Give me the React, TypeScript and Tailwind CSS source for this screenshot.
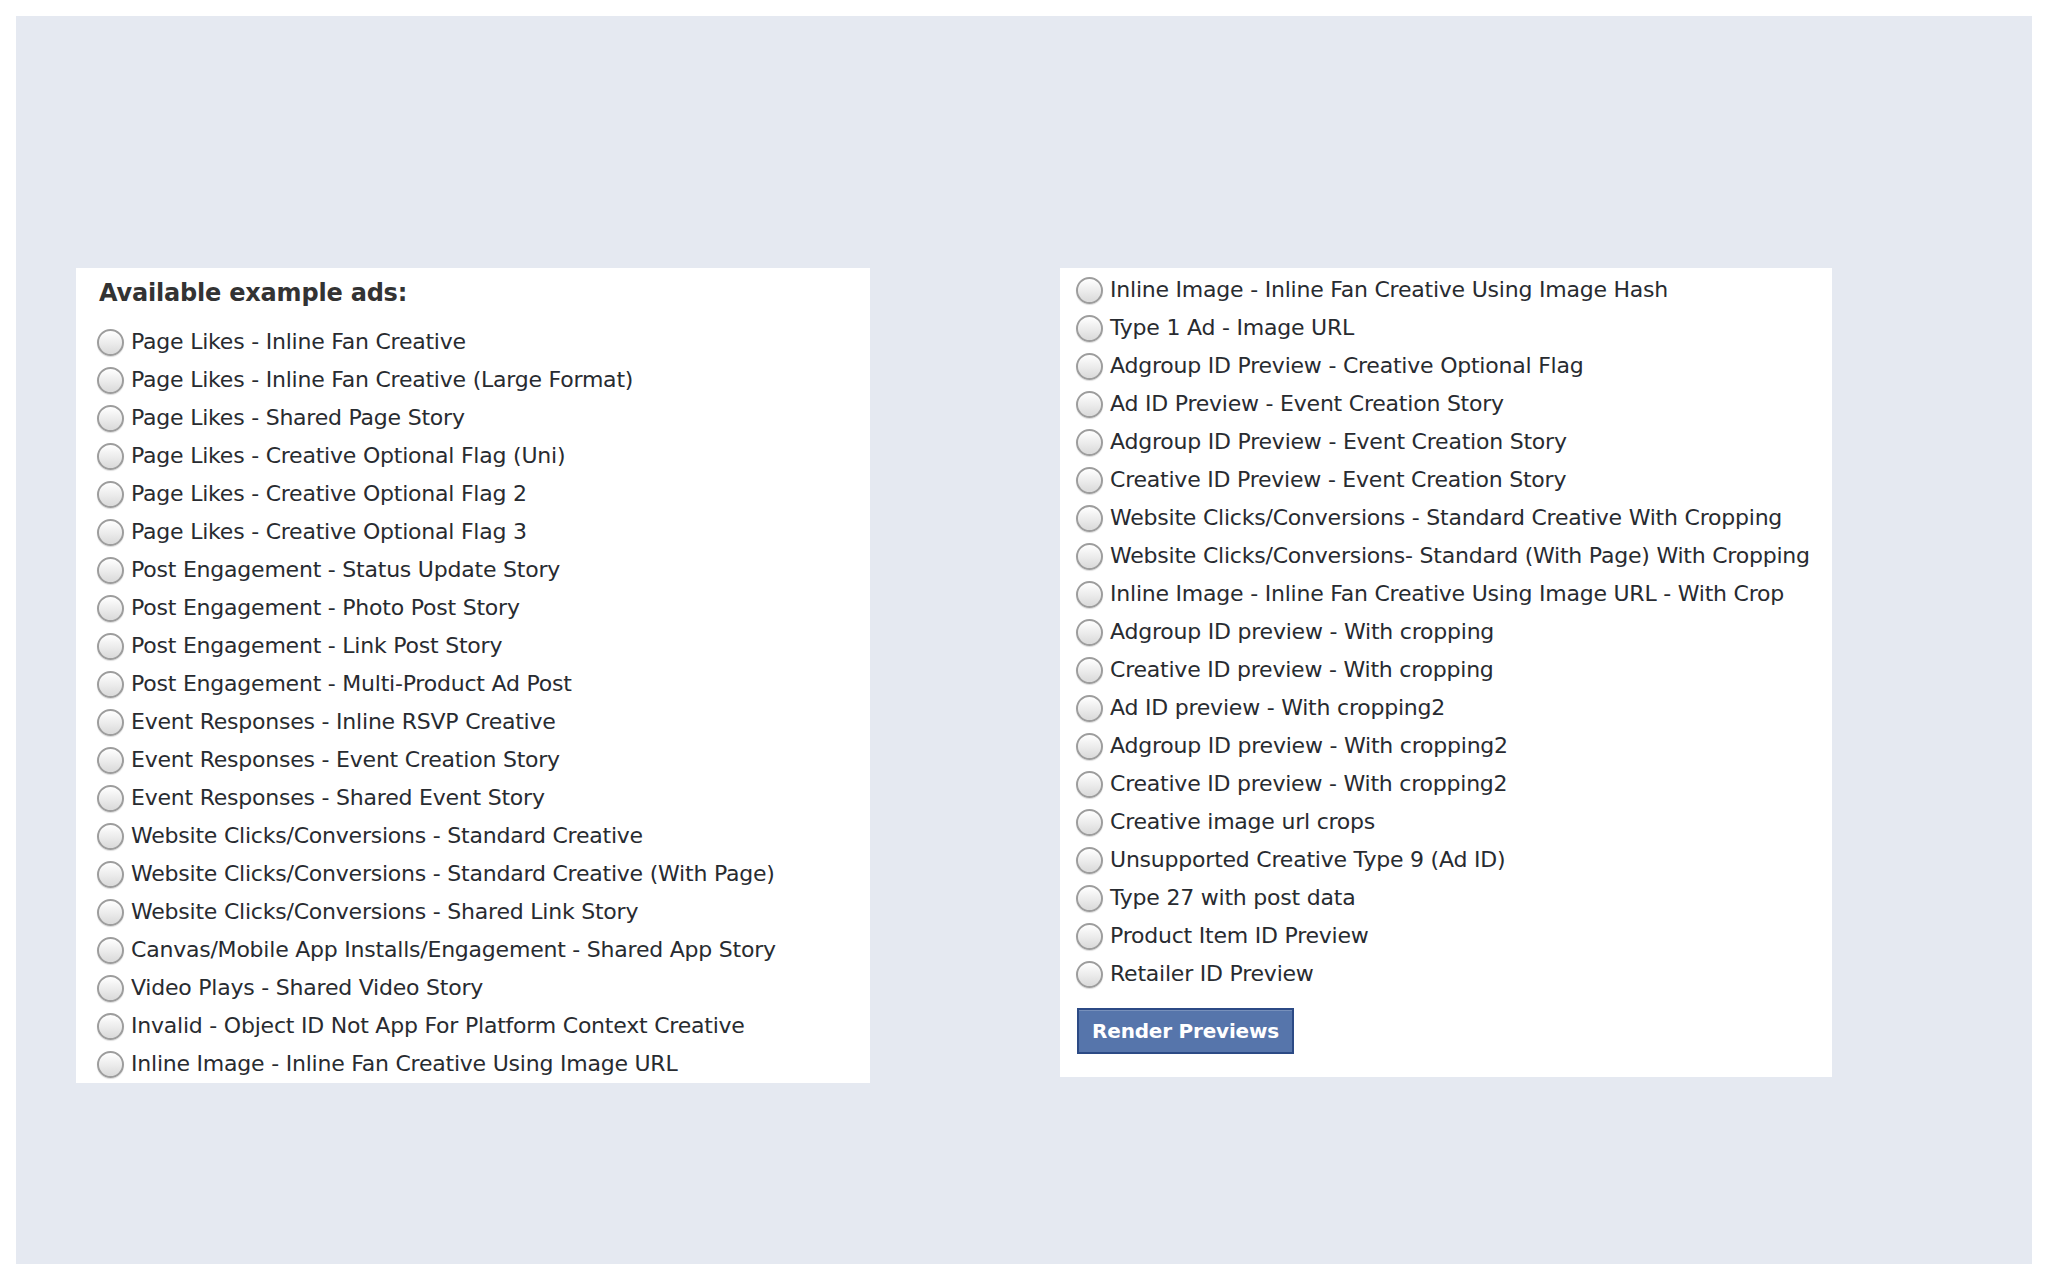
const LEFT_ADS = [
  "Page Likes - Inline Fan Creative",
  "Page Likes - Inline Fan Creative (Large Format)",
  "Page Likes - Shared Page Story",
  "Page Likes - Creative Optional Flag (Uni)",
  "Page Likes - Creative Optional Flag 2",
  "Page Likes - Creative Optional Flag 3",
  "Post Engagement - Status Update Story",
  "Post Engagement - Photo Post Story",
  "Post Engagement - Link Post Story",
  "Post Engagement - Multi-Product Ad Post",
  "Event Responses - Inline RSVP Creative",
  "Event Responses - Event Creation Story",
  "Event Responses - Shared Event Story",
  "Website Clicks/Conversions - Standard Creative",
  "Website Clicks/Conversions - Standard Creative (With Page)",
  "Website Clicks/Conversions - Shared Link Story",
  "Canvas/Mobile App Installs/Engagement - Shared App Story",
  "Video Plays - Shared Video Story",
  "Invalid - Object ID Not App For Platform Context Creative",
  "Inline Image - Inline Fan Creative Using Image URL",
];

const RIGHT_ADS = [
  "Inline Image - Inline Fan Creative Using Image Hash",
  "Type 1 Ad - Image URL",
  "Adgroup ID Preview - Creative Optional Flag",
  "Ad ID Preview - Event Creation Story",
  "Adgroup ID Preview - Event Creation Story",
  "Creative ID Preview - Event Creation Story",
  "Website Clicks/Conversions - Standard Creative With Cropping",
  "Website Clicks/Conversions- Standard (With Page) With Cropping",
  "Inline Image - Inline Fan Creative Using Image URL - With Crop",
  "Adgroup ID preview - With cropping",
  "Creative ID preview - With cropping",
  "Ad ID preview - With cropping2",
  "Adgroup ID preview - With cropping2",
  "Creative ID preview - With cropping2",
  "Creative image url crops",
  "Unsupported Creative Type 9 (Ad ID)",
  "Type 27 with post data",
  "Product Item ID Preview",
  "Retailer ID Preview",
];

function AdOption({ label }: { label: string }) {
  return (
    <label className="flex h-[38px] items-center gap-[7px] cursor-default">
      {/* aqua-style radio */}
      <span className="h-[27px] w-[27px] shrink-0 rounded-full border-2 border-[#9d9d9d] bg-gradient-to-b from-[#ffffff] to-[#dadada] shadow-[inset_0_1px_1px_rgba(255,255,255,0.9),0_1px_1px_rgba(0,0,0,0.15)]" />
      <span className="whitespace-nowrap text-[22px] leading-none tracking-[-0.22px] text-[#282b30]">{label}</span>
    </label>
  );
}

export default function App() {
  return (
    <div className="min-h-screen bg-white p-4 font-['DejaVu_Sans',sans-serif]">
      <div className="flex h-[1248px] items-start gap-[190px] bg-[#e5e9f1] pl-[60px] pt-[252px]">
        <div className="w-[794px] bg-white pl-[21px]">
          <h3 className="pb-[15px] pt-[10px] pl-[2px] text-[24px] font-bold leading-[30px] tracking-[-0.2px] text-[#333]">
            Available example ads:
          </h3>
          {LEFT_ADS.map((ad) => (
            <AdOption key={ad} label={ad} />
          ))}
        </div>

        <div className="w-[772px] bg-white pb-[23px] pl-[16px] pt-[3px]">
          {RIGHT_ADS.map((ad) => (
            <AdOption key={ad} label={ad} />
          ))}
          <button className="ml-px mt-[15px] h-[46px] w-[217px] border-2 border-[#2c4a85] bg-[#5675ab] text-[20px] font-bold tracking-[-0.2px] text-white shadow-[inset_0_1px_0_rgba(255,255,255,0.2)]">
            Render Previews
          </button>
        </div>
      </div>
    </div>
  );
}
